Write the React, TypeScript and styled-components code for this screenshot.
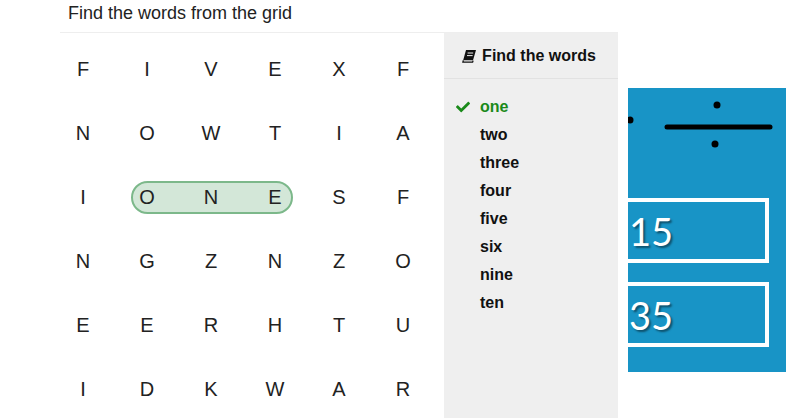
import React, {FC} from 'react';
import styled, {createGlobalStyle} from 'styled-components';
import {FaCheck} from 'react-icons/fa';

const letters = [
  ['F', 'I', 'V', 'E', 'X', 'F'],
  ['N', 'O', 'W', 'T', 'I', 'A'],
  ['I', 'O', 'N', 'E', 'S', 'F'],
  ['N', 'G', 'Z', 'N', 'Z', 'O'],
  ['E', 'E', 'R', 'H', 'T', 'U'],
  ['I', 'D', 'K', 'W', 'A', 'R'],
];

const words = [
  {text: 'one', found: true},
  {text: 'two', found: false},
  {text: 'three', found: false},
  {text: 'four', found: false},
  {text: 'five', found: false},
  {text: 'six', found: false},
  {text: 'nine', found: false},
  {text: 'ten', found: false},
];

// slanted book, like the old font-awesome one
const BookIcon: FC = () => (
  <svg width="14" height="14" viewBox="0 0 14 14">
    <path d="M4 1h10l-3 10.3H1.2z" fill="#111" />
    <path
      d="M1.3 11.3 L0.9 13.2 H10.6 L11.1 11.6"
      fill="none"
      stroke="#111"
      strokeWidth="1.3"
    />
    <path d="M5.6 4h5.6M5 6.6h5.6" stroke="#efefef" strokeWidth="1" />
  </svg>
);

const App: FC = () => {
  return (
    <>
      <GlobalStyle />
      <Page>
        <Puzzle>
          <Title>Find the words from the grid</Title>
          <Board>
            <Grid>
              <Found />
              {letters.flat().map((l, i) => (
                <Cell key={i}>{l}</Cell>
              ))}
            </Grid>
            <Sidebar>
              <SidebarHeader>
                <BookIcon />
                Find the words
              </SidebarHeader>
              <WordList>
                {words.map(w => (
                  <Word key={w.text} found={w.found}>
                    <CheckSlot>{w.found && <FaCheck size={14} />}</CheckSlot>
                    {w.text}
                  </Word>
                ))}
              </WordList>
            </Sidebar>
          </Board>
        </Puzzle>
        <Panel>
          <svg width="158" height="80" viewBox="0 0 158 80">
            <circle cx="2" cy="32" r="3.5" fill="#000" />
            <circle cx="89" cy="17" r="3.5" fill="#000" />
            <line
              x1="39"
              y1="39"
              x2="142"
              y2="39"
              stroke="#000"
              strokeWidth="5"
              strokeLinecap="round"
            />
            <circle cx="87" cy="56" r="3.5" fill="#000" />
          </svg>
          <AnswerBox top={30}>15</AnswerBox>
          <AnswerBox top={19}>35</AnswerBox>
        </Panel>
      </Page>
    </>
  );
};

export default App;

const GlobalStyle = createGlobalStyle`
  html, body {
    margin: 0;
    padding: 0;
    background: #fff;
    overflow: hidden;
  }
  body {
    font-family: "Liberation Sans", Arial, sans-serif;
    color: #222;
  }
`;

const Page = styled.div`
  display: flex;
  align-items: flex-start;
  width: 786px;
  height: 418px;
  padding-left: 60px;
  box-sizing: border-box;
  overflow: hidden;
`;

const Puzzle = styled.div`
  display: flex;
  flex-direction: column;
  width: 558px;
  flex-shrink: 0;
`;

const Title = styled.div`
  height: 33px;
  padding-left: 8px;
  box-sizing: border-box;
  border-bottom: 1px solid #eee;
  font-size: 18px;
  line-height: 26px;
  color: #222;
`;

const Board = styled.div`
  display: flex;
  height: 390px;
`;

const Grid = styled.div`
  position: relative;
  display: grid;
  grid-template-columns: repeat(6, 64px);
  grid-auto-rows: 64px;
  width: 384px;
  padding-top: 4px;
  box-sizing: border-box;
`;

const Cell = styled.div`
  position: relative;
  display: flex;
  align-items: center;
  justify-content: center;
  padding-right: 18px;
  font-size: 20px;
  color: #222;
`;

const Found = styled.div`
  position: absolute;
  left: 71px;
  top: 148px;
  width: 162px;
  height: 33px;
  box-sizing: border-box;
  border: 2px solid #7cb88a;
  border-radius: 17px;
  background: #d3e7d8;
`;

const Sidebar = styled.div`
  width: 174px;
  background: #efefef;
`;

const SidebarHeader = styled.div`
  display: flex;
  align-items: center;
  justify-content: center;
  gap: 6px;
  height: 45px;
  padding-right: 4px;
  border-bottom: 1px solid #e2e2e2;
  font-size: 16px;
  font-weight: bold;
  color: #111;
`;

const WordList = styled.div`
  display: flex;
  flex-direction: column;
  padding-top: 14px;
`;

const Word = styled.div<{found: boolean}>`
  display: flex;
  align-items: center;
  height: 28px;
  padding-left: 12px;
  font-size: 16px;
  font-weight: bold;
  color: ${props => (props.found ? '#1a8a1a' : '#111')};
`;

const CheckSlot = styled.span`
  display: flex;
  align-items: center;
  width: 24px;
  color: #1a8a1a;
`;

const Panel = styled.div`
  display: flex;
  flex-direction: column;
  flex-shrink: 0;
  width: 158px;
  height: 284px;
  margin-top: 88px;
  margin-left: 10px;
  background: #1894c6;
  overflow: hidden;
`;

const AnswerBox = styled.div<{top: number}>`
  display: flex;
  align-items: center;
  width: 171px;
  height: 65px;
  margin-top: ${props => props.top}px;
  margin-left: -30px;
  padding-left: 27px;
  box-sizing: border-box;
  border: 4px solid #fff;
  font-family: Lato, "Open Sans", sans-serif;
  font-size: 38px;
  color: #fff;
  text-shadow: 2px 2px 2px rgba(0, 0, 0, 0.45);
`;
